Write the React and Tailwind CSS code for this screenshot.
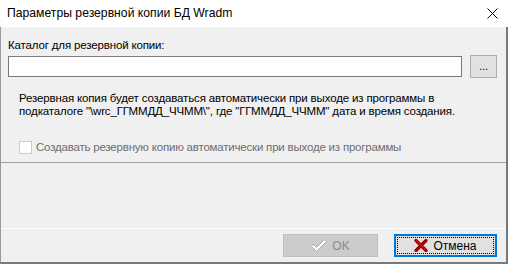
import React from 'react';

const font = { fontFamily: '"Liberation Sans", Arial, sans-serif' };

function CloseIcon() {
    return (
        <svg width="11" height="11" viewBox="0 0 11 11" className="block">
            <path d="M0.5 0.5 L10.5 10.5 M10.5 0.5 L0.5 10.5" stroke="#000" strokeWidth="1" fill="none" />
        </svg>
    );
}

function CheckIcon() {
    return (
        <svg width="18" height="13" viewBox="0 0 18 13" className="block">
            <path d="M0.5 7.5 L2.5 5.5 L5.5 8.5 L13.5 0.5 L15.5 2.5 L5.5 12.5 Z" fill="#fff" stroke="#a8a8a8" strokeWidth="1" strokeLinejoin="round" />
        </svg>
    );
}

function CrossIcon() {
    return (
        <svg width="14" height="13" viewBox="0 0 14 13" className="block">
            <path d="M2 1.5 L12 11.5 M12 1.5 L2 11.5" stroke="#a30000" strokeWidth="3.2" strokeLinecap="round" fill="none" />
            <path d="M2.5 1.5 L11.5 10.5" stroke="#d02020" strokeWidth="1" strokeLinecap="round" fill="none" />
        </svg>
    );
}

export default function App() {
    return (
        <div className="w-[508px] h-[264px] flex flex-col bg-[#f0f0f0] text-black overflow-hidden" style={font}>
            {/* title bar */}
            <div className="h-[27px] bg-white flex items-center justify-between pl-[7px] pr-[10px]">
                <span className="text-[12.2px] leading-none">Параметры резервной копии БД Wradm</span>
                <CloseIcon />
            </div>

            <div className="flex-1 flex flex-col border-l border-r-2 border-b-2 border-l-[#9a9a9a] border-r-[#6e7a86] border-b-[#7a7a7a]">
                <div className="h-[135px] flex flex-col pl-[7px] pr-[9px] pt-[11px] text-[11.5px] tracking-[-0.15px]">
                    <div className="leading-[15px]">Каталог для резервной копии:</div>
                    <div className="mt-[2px] flex items-center gap-[8px]">
                        <div className="flex-1 h-[21px] bg-white border border-[#7a7a7a]" />
                        <div className="w-[27px] h-[23px] bg-[#e1e1e1] border border-[#adadad] flex items-end justify-center pb-[5px] leading-none">...</div>
                    </div>
                    <div className="mt-[14px] pl-[11px] leading-[13px]">
                        <div>Резервная копия будет создаваться автоматически при выходе из программы в</div>
                        <div>подкаталоге "\wrc_ГГММДД_ЧЧММ\", где "ГГММДД_ЧЧММ" дата и время создания.</div>
                    </div>
                    <div className="mt-[22px] pl-[11px] flex items-center gap-[4px]">
                        <div className="w-[13px] h-[13px] bg-white border border-[#cccccc]" />
                        <span className="leading-[15px] text-[#6d6d6d] tracking-[-0.2px]">Создавать резервную копию автоматически при выходе из программы</span>
                    </div>
                </div>
                <div className="h-px bg-[#a0a0a0]" />
                <div className="h-[65px]" />
                <div className="h-px bg-white" />
                <div className="flex-1 flex justify-end items-start pt-[5px] pr-[9px] gap-[16px] text-[12px]">
                    <div className="w-[95px] h-[23px] bg-[#cccccc] border border-[#bfbfbf] flex items-center justify-center gap-[3px] text-[#8a8a8a]">
                        <CheckIcon />
                        <span>OK</span>
                    </div>
                    <div className="w-[103px] h-[23px] bg-[#e1e1e1] border-2 border-[#0078d7] p-px">
                        <div className="w-full h-full border border-dotted border-black flex items-center justify-center gap-[5px]">
                            <CrossIcon />
                            <span>Отмена</span>
                        </div>
                    </div>
                </div>
            </div>
        </div>
    );
}
